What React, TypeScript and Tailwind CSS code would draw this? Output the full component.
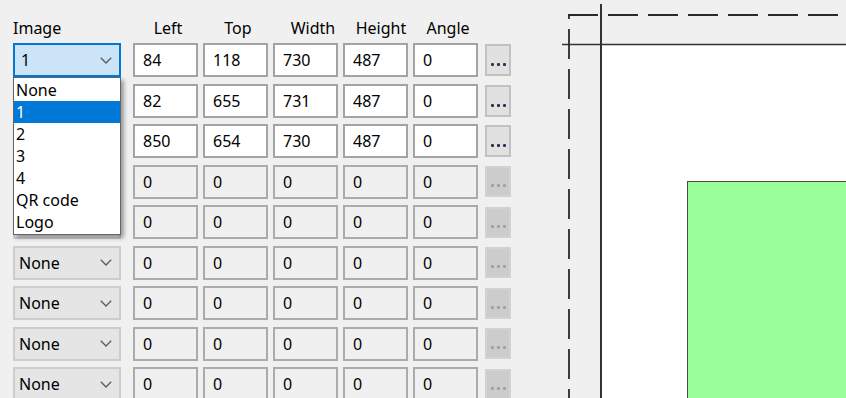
import React from "react";

type Row = { img: string; vals: string[]; enabled: boolean; focused?: boolean; hidden?: boolean };

const rows: Row[] = [
  { img: "1", vals: ["84", "118", "730", "487", "0"], enabled: true, focused: true },
  { img: "2", vals: ["82", "655", "731", "487", "0"], enabled: true, hidden: true },
  { img: "3", vals: ["850", "654", "730", "487", "0"], enabled: true, hidden: true },
  { img: "None", vals: ["0", "0", "0", "0", "0"], enabled: false, hidden: true },
  { img: "None", vals: ["0", "0", "0", "0", "0"], enabled: false, hidden: true },
  { img: "None", vals: ["0", "0", "0", "0", "0"], enabled: false },
  { img: "None", vals: ["0", "0", "0", "0", "0"], enabled: false },
  { img: "None", vals: ["0", "0", "0", "0", "0"], enabled: false },
  { img: "None", vals: ["0", "0", "0", "0", "0"], enabled: false },
];

const Chevron = () => (
  <svg width="12" height="7" viewBox="0 0 12 7" className="shrink-0">
    <path d="M0.8 0.8 L6 6 L11.2 0.8" fill="none" stroke="#5a5a5a" strokeWidth="1.3" />
  </svg>
);

function Combo({ text, focused, hidden }: { text: string; focused?: boolean; hidden?: boolean }) {
  return (
    <div
      className={
        focused
          ? "w-[108px] h-[34px] mr-[12px] flex items-center justify-between pl-[6px] pr-[7px] border-2 border-[#0078d7] bg-[#cce4f7]"
          : "w-[108px] h-[34px] mr-[12px] flex items-center justify-between pl-[4px] pr-[7px] border-2 border-[#cdcdcd] bg-[#e5e5e5]"
      }
    >
      {hidden ? <span /> : <span className="text-black">{text}</span>}
      {hidden ? null : <Chevron />}
    </div>
  );
}

function Box({ v, enabled }: { v: string; enabled: boolean }) {
  return (
    <div
      className={
        enabled
          ? "w-[65px] h-[34px] flex items-center pl-[8px] border-2 border-[#a3a3a3] bg-white"
          : "w-[65px] h-[34px] flex items-center pl-[8px] border-2 border-[#ababab] bg-[#f0f0f0]"
      }
    >
      <span className="text-black">{v}</span>
    </div>
  );
}

function Dots({ enabled }: { enabled: boolean }) {
  const dot = enabled ? "w-[3px] h-[3px] rounded-[1px] bg-[#303050]" : "w-[3px] h-[3px] rounded-[1px] bg-[#a0a0a8]";
  return (
    <div
      className={
        enabled
          ? "ml-[2px] w-[26px] h-[32px] flex items-end justify-center pb-[8px] border-2 border-[#c2c2c2] bg-[#e1e1e1]"
          : "ml-[2px] w-[26px] h-[31px] flex items-end justify-center pb-[8px] border-2 border-[#d2d2d2] bg-[#cccccc]"
      }
    >
      <div className="flex gap-[3px]">
        <span className={dot} />
        <span className={dot} />
        <span className={dot} />
      </div>
    </div>
  );
}

const items = ["None", "1", "2", "3", "4", "QR code", "Logo"];

export default function App() {
  return (
    <div
      className="w-[846px] h-[398px] overflow-hidden bg-[#f0f0f0] flex text-[16px] leading-none text-black"
      style={{ fontFamily: '"Noto Sans", "DejaVu Sans", sans-serif' }}
    >
      <div className="relative w-[540px] shrink-0 pl-[13px] pt-[18px]">
        {/* header */}
        <div className="flex h-[20px] items-center">
          <div className="w-[120px]">Image</div>
          <div className="w-[70px] text-center">Left</div>
          <div className="w-[70px] text-center">Top</div>
          <div className="w-[70px] text-center pl-[10px]">Width</div>
          <div className="w-[70px] text-center pl-[6px]">Height</div>
          <div className="w-[70px] text-center">Angle</div>
        </div>
        <div className="mt-[5px] flex flex-col gap-[6.5px]">
          {rows.map((r, i) => (
            <div key={i} className="flex items-center">
              <Combo text={r.img} focused={r.focused} hidden={r.hidden} />
              <div className="flex gap-[5px]">
                {r.vals.map((v, j) => (
                  <Box key={j} v={v} enabled={r.enabled} />
                ))}
              </div>
              <div className="ml-[5px]">
                <Dots enabled={r.enabled} />
              </div>
            </div>
          ))}
        </div>
        {/* dropdown list */}
        <div className="absolute left-[13px] top-[77px] w-[108px] border border-[#646464] bg-white shadow-[3px_3px_4px_rgba(0,0,0,0.35)] py-px">
          {items.map((it) => (
            <div
              key={it}
              className={
                it === "1"
                  ? "h-[22px] flex items-center pl-[2px] bg-[#0078d7] text-white"
                  : "h-[22px] flex items-center pl-[2px] text-black"
              }
            >
              {it}
            </div>
          ))}
        </div>
      </div>
      <svg width="306" height="398" viewBox="0 0 306 398" className="shrink-0">
        <rect x="62" y="45" width="244" height="353" fill="#ffffff" />
        <rect x="147.5" y="181.5" width="170" height="230" fill="#9aff9a" stroke="#4a4a4a" strokeWidth="1" />
        <line x1="61" y1="4" x2="61" y2="398" stroke="#333333" strokeWidth="2" />
        <line x1="22" y1="44.5" x2="306" y2="44.5" stroke="#333333" strokeWidth="1.6" />
        <line x1="28" y1="15" x2="306" y2="15" stroke="#2a2a2a" strokeWidth="1.8" strokeDasharray="30 10" />
        <line x1="29" y1="14" x2="29" y2="19" stroke="#2a2a2a" strokeWidth="1.8" />
        <line x1="29" y1="29" x2="29" y2="398" stroke="#2a2a2a" strokeWidth="1.8" strokeDasharray="30 10" />
      </svg>
    </div>
  );
}
